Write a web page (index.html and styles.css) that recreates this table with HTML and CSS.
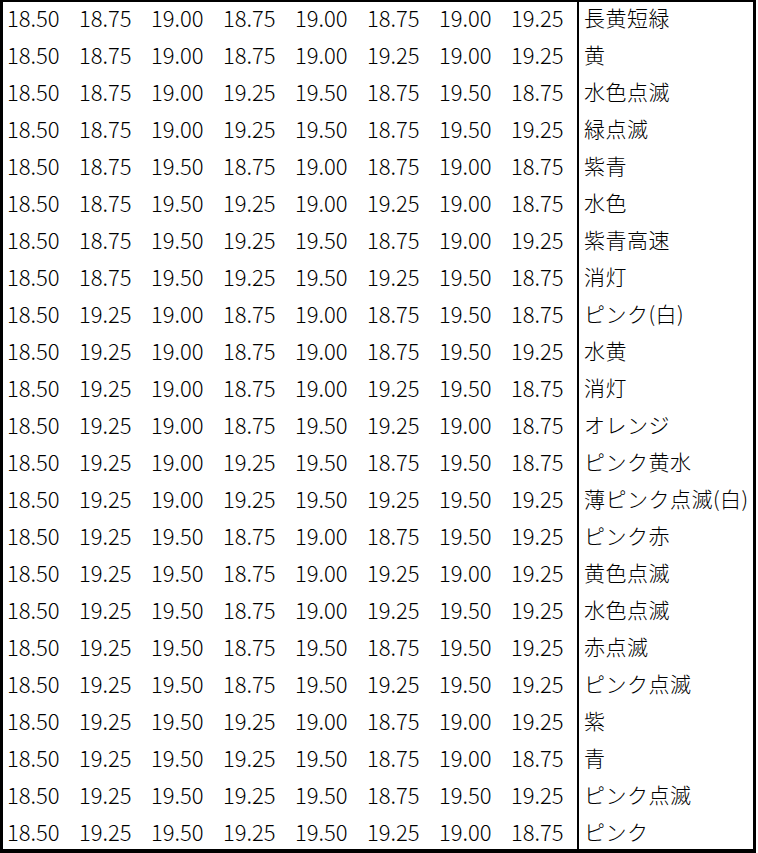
FILE: index.html
```html
<!DOCTYPE html>
<html lang="ja">
<head>
<meta charset="utf-8">
<title>Table</title>
<link rel="stylesheet" href="styles.css">
</head>
<body>
<table class="grid">
<colgroup>
<col class="c"><col class="c"><col class="c"><col class="c"><col class="c"><col class="c"><col class="c"><col class="c"><col class="n">
</colgroup>
<tbody>
<tr class="first"><td>18.50</td><td>18.75</td><td>19.00</td><td>18.75</td><td>19.00</td><td>18.75</td><td>19.00</td><td class="last">19.25</td><td class="name">長黄短緑</td></tr>
<tr><td>18.50</td><td>18.75</td><td>19.00</td><td>18.75</td><td>19.00</td><td>19.25</td><td>19.00</td><td class="last">19.25</td><td class="name">黄</td></tr>
<tr><td>18.50</td><td>18.75</td><td>19.00</td><td>19.25</td><td>19.50</td><td>18.75</td><td>19.50</td><td class="last">18.75</td><td class="name">水色点滅</td></tr>
<tr><td>18.50</td><td>18.75</td><td>19.00</td><td>19.25</td><td>19.50</td><td>18.75</td><td>19.50</td><td class="last">19.25</td><td class="name">緑点滅</td></tr>
<tr><td>18.50</td><td>18.75</td><td>19.50</td><td>18.75</td><td>19.00</td><td>18.75</td><td>19.00</td><td class="last">18.75</td><td class="name">紫青</td></tr>
<tr><td>18.50</td><td>18.75</td><td>19.50</td><td>19.25</td><td>19.00</td><td>19.25</td><td>19.00</td><td class="last">18.75</td><td class="name">水色</td></tr>
<tr><td>18.50</td><td>18.75</td><td>19.50</td><td>19.25</td><td>19.50</td><td>18.75</td><td>19.00</td><td class="last">19.25</td><td class="name">紫青高速</td></tr>
<tr><td>18.50</td><td>18.75</td><td>19.50</td><td>19.25</td><td>19.50</td><td>19.25</td><td>19.50</td><td class="last">18.75</td><td class="name">消灯</td></tr>
<tr><td>18.50</td><td>19.25</td><td>19.00</td><td>18.75</td><td>19.00</td><td>18.75</td><td>19.50</td><td class="last">18.75</td><td class="name">ピンク(白)</td></tr>
<tr><td>18.50</td><td>19.25</td><td>19.00</td><td>18.75</td><td>19.00</td><td>18.75</td><td>19.50</td><td class="last">19.25</td><td class="name">水黄</td></tr>
<tr><td>18.50</td><td>19.25</td><td>19.00</td><td>18.75</td><td>19.00</td><td>19.25</td><td>19.50</td><td class="last">18.75</td><td class="name">消灯</td></tr>
<tr><td>18.50</td><td>19.25</td><td>19.00</td><td>18.75</td><td>19.50</td><td>19.25</td><td>19.00</td><td class="last">18.75</td><td class="name">オレンジ</td></tr>
<tr><td>18.50</td><td>19.25</td><td>19.00</td><td>19.25</td><td>19.50</td><td>18.75</td><td>19.50</td><td class="last">18.75</td><td class="name">ピンク黄水</td></tr>
<tr><td>18.50</td><td>19.25</td><td>19.00</td><td>19.25</td><td>19.50</td><td>19.25</td><td>19.50</td><td class="last">19.25</td><td class="name">薄ピンク点滅(白)</td></tr>
<tr><td>18.50</td><td>19.25</td><td>19.50</td><td>18.75</td><td>19.00</td><td>18.75</td><td>19.50</td><td class="last">19.25</td><td class="name">ピンク赤</td></tr>
<tr><td>18.50</td><td>19.25</td><td>19.50</td><td>18.75</td><td>19.00</td><td>19.25</td><td>19.00</td><td class="last">19.25</td><td class="name">黄色点滅</td></tr>
<tr><td>18.50</td><td>19.25</td><td>19.50</td><td>18.75</td><td>19.00</td><td>19.25</td><td>19.50</td><td class="last">19.25</td><td class="name">水色点滅</td></tr>
<tr><td>18.50</td><td>19.25</td><td>19.50</td><td>18.75</td><td>19.50</td><td>18.75</td><td>19.50</td><td class="last">19.25</td><td class="name">赤点滅</td></tr>
<tr><td>18.50</td><td>19.25</td><td>19.50</td><td>18.75</td><td>19.50</td><td>19.25</td><td>19.50</td><td class="last">19.25</td><td class="name">ピンク点滅</td></tr>
<tr><td>18.50</td><td>19.25</td><td>19.50</td><td>19.25</td><td>19.00</td><td>18.75</td><td>19.00</td><td class="last">19.25</td><td class="name">紫</td></tr>
<tr><td>18.50</td><td>19.25</td><td>19.50</td><td>19.25</td><td>19.50</td><td>18.75</td><td>19.00</td><td class="last">18.75</td><td class="name">青</td></tr>
<tr><td>18.50</td><td>19.25</td><td>19.50</td><td>19.25</td><td>19.50</td><td>18.75</td><td>19.50</td><td class="last">19.25</td><td class="name">ピンク点滅</td></tr>
<tr><td>18.50</td><td>19.25</td><td>19.50</td><td>19.25</td><td>19.50</td><td>19.25</td><td>19.00</td><td class="last">18.75</td><td class="name">ピンク</td></tr>
</tbody>
</table>
</body>
</html>
```

FILE: styles.css
```css
html, body {
  margin: 0;
  padding: 0;
  background: #ffffff;
}

.grid {
  border-collapse: separate;
  border-spacing: 0;
  table-layout: fixed;
  width: 756px;
  box-sizing: border-box;
  border-style: solid;
  border-color: #000000;
  border-width: 2px 3px 4px 3px;
  font-family: "Noto Sans CJK JP", "Noto Sans", sans-serif;
  font-weight: 300;
  font-size: 22px;
  color: #000000;
}

.grid col.c {
  width: 72px;
}

.grid td {
  box-sizing: border-box;
  height: 37px;
  padding: 0 0 6px 4px;
  white-space: nowrap;
  vertical-align: bottom;
  line-height: 24px;
}

.grid tr.first td {
  height: 33px;
}

.grid td.last {
  border-right: 2px solid #000000;
}

.grid td.name {
  padding-left: 5px;
  font-size: 21px;
  letter-spacing: 0.5px;
}
```
